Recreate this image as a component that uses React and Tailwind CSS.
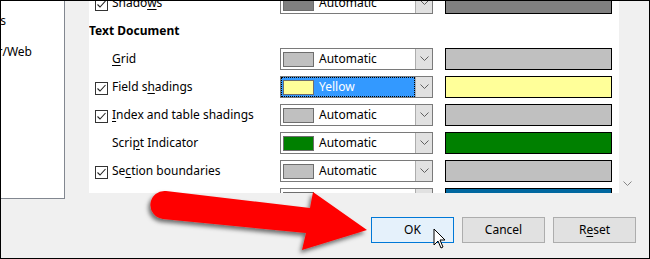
import React from "react";

const rows = [
  { label: "Shadows", u: 5, check: true, swatch: "#808080", value: "Automatic", color: "#808080" },
  { heading: "Text Document" },
  { label: "Grid", u: 0, check: false, swatch: "#c0c0c0", value: "Automatic", color: "#c0c0c0" },
  { label: "Field shadings", u: 7, check: true, swatch: "#ffff99", value: "Yellow", color: "#ffff99", selected: true },
  { label: "Index and table shadings", u: 0, check: true, swatch: "#c0c0c0", value: "Automatic", color: "#c0c0c0" },
  { label: "Script Indicator", u: 4, check: false, swatch: "#008000", value: "Automatic", color: "#008000" },
  { label: "Section boundaries", u: 2, check: true, swatch: "#c0c0c0", value: "Automatic", color: "#c0c0c0" },
  { label: "Headers and Footer Delimiter", u: 0, check: true, swatch: "#c0c0c0", value: "Automatic", color: "#00679f" },
];

const Mnemonic = ({ text, u }) => (
  <span>
    {text.slice(0, u)}
    <span className="underline underline-offset-2">{text[u]}</span>
    {text.slice(u + 1)}
  </span>
);

const Chevron = ({ color = "#606060" }) => (
  <svg width="9" height="6" viewBox="0 0 9 6">
    <path d="M0.5 0.5 L4.5 4.5 L8.5 0.5" fill="none" stroke={color} strokeWidth="1" />
  </svg>
);

const Checkbox = () => (
  <div className="w-[13px] h-[13px] border border-[#333] bg-white flex items-center justify-center mt-[3px]">
    <svg width="11" height="11" viewBox="0 0 11 11">
      <path d="M1.5 5.5 L4 8 L9.5 2" fill="none" stroke="#222" strokeWidth="1.1" />
    </svg>
  </div>
);

const Dropdown = ({ swatch, value, selected }) => (
  <div className="w-[153px] h-[22px] border border-[#7a7a7a] bg-white flex">
    <div
      className={`flex-1 flex items-center pl-[2px] ${
        selected ? "bg-[#3399ff] text-white outline-1 outline-dotted outline-black -outline-offset-1" : "text-black"
      }`}
    >
      <div className="w-[31px] h-[15px] border border-[#6e6e6e] shrink-0" style={{ backgroundColor: swatch }} />
      <span className="ml-[5px]">{value}</span>
    </div>
    <div className="w-[17px] h-full bg-[#e1e1e1] border-l border-[#adadad] flex items-center justify-center">
      <Chevron />
    </div>
  </div>
);

const Button = ({ children, primary }) => (
  <button
    className={`w-[83px] h-[26px] border text-[12px] text-black ${
      primary ? "bg-[#e5f1fb] border-[#0078d7]" : "bg-[#e1e1e1] border-[#adadad]"
    }`}
  >
    {children}
  </button>
);

export default function App() {
  return (
    <div
      className="relative w-[650px] h-[259px] bg-[#f0f0f0] border border-black overflow-hidden text-[12px] text-black"
      style={{ fontFamily: '"Noto Sans", "Open Sans", sans-serif' }}
    >
      <div className="flex items-start h-[198px]">
        {/* Tree */}
        <div className="w-[64px] h-[198px] bg-white border-r border-b border-[#828790] overflow-hidden shrink-0">
          <div className="flex justify-end w-[5px] mt-[11px]">
            <span className="whitespace-nowrap shrink-0">Language Settings</span>
          </div>
          <div className="flex justify-end w-[31px] mt-[13px]">
            <span className="whitespace-nowrap shrink-0">LibreOffice Writer/Web</span>
          </div>
        </div>

        {/* Colour list */}
        <div className="ml-[24px] w-[530px] h-[192px] bg-white overflow-hidden shrink-0">
          <div className="mt-[-12px]">
            {rows.map((r, i) =>
              r.heading ? (
                <div key={i} className="h-[28px] flex items-center font-bold">
                  {r.heading}
                </div>
              ) : (
                <div key={i} className="h-[28px] flex items-center">
                  <div className="w-[191px] flex items-center pl-[6px] shrink-0">
                    <div className="w-[13px] shrink-0">{r.check && <Checkbox />}</div>
                    <span className="ml-[4px] whitespace-nowrap">
                      <Mnemonic text={r.label} u={r.u} />
                    </span>
                  </div>
                  <Dropdown swatch={r.swatch} value={r.value} selected={r.selected} />
                  <div className="ml-[12px] w-[167px] h-[22px] border border-black" style={{ backgroundColor: r.color }} />
                </div>
              )
            )}
          </div>
        </div>

        {/* Scrollbar */}
        <div className="w-[17px] h-[192px] flex flex-col justify-end items-center pb-[6px]">
          <Chevron color="#868686" />
        </div>
      </div>

      <div className="flex justify-end gap-[8px] pr-[13px] mt-[18px]">
        <Button primary>OK</Button>
        <Button>Cancel</Button>
        <Button>
          <Mnemonic text="Reset" u={1} />
        </Button>
      </div>

      {/* Annotation arrow */}
      <svg className="absolute left-0 top-0 pointer-events-none" width="650" height="259" viewBox="0 0 650 259">
        <defs>
          <filter id="sh" x="-20%" y="-20%" width="140%" height="140%">
            <feDropShadow dx="-2" dy="3" stdDeviation="2" floodColor="#000" floodOpacity="0.55" />
          </filter>
        </defs>
        <path
          d="M165 190 L309 207 L312 191 L366 229 L301 249 L305 232 L162 218 A14 14 0 0 1 165 190 Z"
          fill="#ff0000"
          filter="url(#sh)"
        />
      </svg>

      {/* Mouse pointer */}
      <svg className="absolute left-[432px] top-[227px] pointer-events-none" width="14" height="22" viewBox="0 0 14 22">
        <path d="M1 1 L1 17 L5 13 L8 20 L10 19 L7 12 L12 12 Z" fill="#fff" stroke="#000" strokeWidth="1" strokeLinejoin="miter" />
      </svg>
    </div>
  );
}
